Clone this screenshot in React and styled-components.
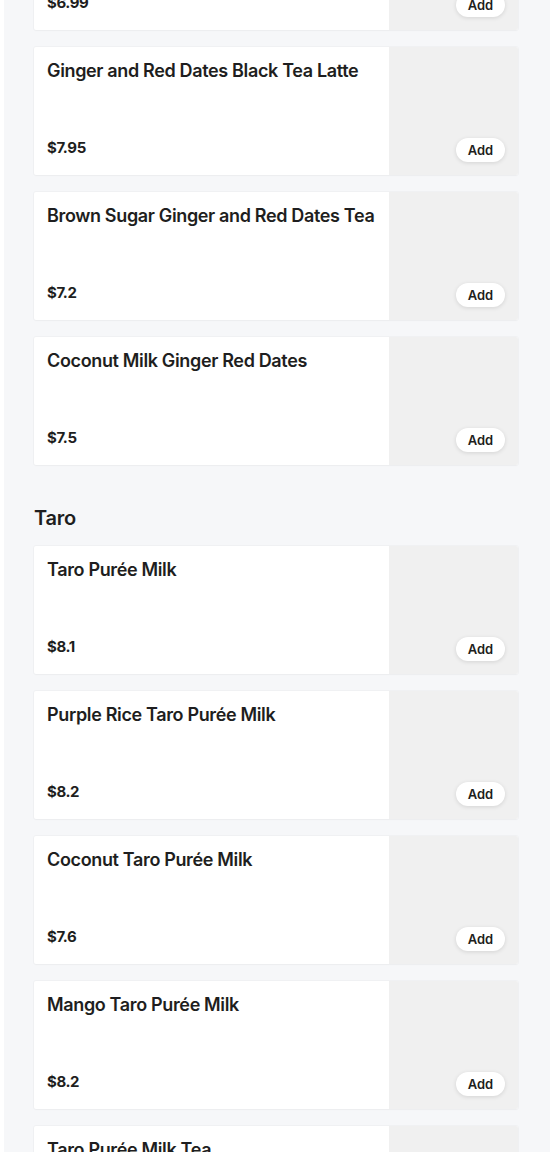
import React from "react";
import styled, { createGlobalStyle } from "styled-components";

const Global = createGlobalStyle`
  html, body { margin: 0; padding: 0; background: #ffffff; }
  body { font-family: "Inter", "Liberation Sans", sans-serif; color: #1e1e20; overflow: hidden; }
`;

const Page = styled.div`
  margin-left: 4px;
  min-height: 1152px;
  background: #f6f7f9;
  padding: 0 32px 0 30px;
  overflow: hidden;
`;

const Scroller = styled.div`
  margin-top: -98px;
  display: flex;
  flex-direction: column;
`;

const Section = styled.section`
  display: flex;
  flex-direction: column;
  gap: 17px;
  margin-top: ${(p) => p.$top || 0}px;
`;

const SectionTitle = styled.h2`
  margin: 39px 0 0 0;
  font-size: 20px;
  font-weight: 600;
  line-height: 28px;
  letter-spacing: -0.2px;
  color: #1e1e20;
`;

const Card = styled.div`
  display: flex;
  height: 128px;
  background: #ffffff;
  box-shadow: 0 0 0 1px rgba(0, 0, 0, 0.025), 0 1px 2px rgba(0, 0, 0, 0.02);
  border-radius: 2px;
  overflow: hidden;
`;

const Info = styled.div`
  flex: 1;
  min-width: 0;
  display: flex;
  flex-direction: column;
  justify-content: space-between;
  padding: 12px 6px 15px 13px;
`;

const Name = styled.div`
  font-size: 18px;
  font-weight: 600;
  line-height: 24px;
  letter-spacing: -0.35px;
`;

const Price = styled.div`
  font-size: 15px;
  font-weight: 700;
  line-height: 24px;
  letter-spacing: -0.4px;
`;

const Thumb = styled.div`
  width: 129px;
  flex: none;
  background: #f0f0f0;
  display: flex;
  align-items: flex-end;
  justify-content: flex-end;
  padding: 0 13px 13px 0;
  box-sizing: border-box;
`;

const AddButton = styled.button`
  width: 49px;
  height: 24px;
  border: none;
  border-radius: 12px;
  background: #ffffff;
  box-shadow: 0 1px 4px rgba(0, 0, 0, 0.12);
  font-family: inherit;
  font-size: 13px;
  font-weight: 600;
  color: #1e1e20;
  padding: 0;
  cursor: pointer;
`;

const Item = ({ name, price }) => (
  <Card>
    <Info>
      <Name>{name}</Name>
      <Price>{price}</Price>
    </Info>
    <Thumb>
      <AddButton>Add</AddButton>
    </Thumb>
  </Card>
);

const ginger = [
  { name: "Ginger Red Dates Milk Tea", price: "$6.99" },
  { name: "Ginger and Red Dates Black Tea Latte", price: "$7.95" },
  { name: "Brown Sugar Ginger and Red Dates Tea", price: "$7.2" },
  { name: "Coconut Milk Ginger Red Dates", price: "$7.5" },
];

const taro = [
  { name: "Taro Purée Milk", price: "$8.1" },
  { name: "Purple Rice Taro Purée Milk", price: "$8.2" },
  { name: "Coconut Taro Purée Milk", price: "$7.6" },
  { name: "Mango Taro Purée Milk", price: "$8.2" },
  { name: "Taro Purée Milk Tea", price: "$8.5" },
];

export default function App() {
  return (
    <>
      <Global />
      <Page>
        <Scroller>
          <Section>
            {ginger.map((it) => (
              <Item key={it.name} {...it} />
            ))}
          </Section>
          <SectionTitle>Taro</SectionTitle>
          <Section $top={14}>
            {taro.map((it) => (
              <Item key={it.name} {...it} />
            ))}
          </Section>
        </Scroller>
      </Page>
    </>
  );
}
